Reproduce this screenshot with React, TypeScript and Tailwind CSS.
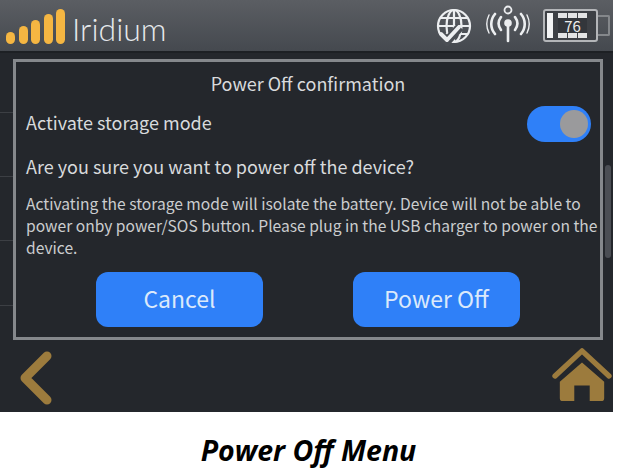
const SIGNAL_BARS = ['h-[12px]', 'h-[18px]', 'h-[24px]', 'h-[30px]', 'h-[35px]'];

function GlobeCheck() {
  return (
    <svg width="38" height="38" viewBox="0 0 38 38" fill="none" stroke="#eceef0" strokeWidth="2.2" className="mt-[2px]">
      <circle cx="19" cy="18" r="16" />
      <ellipse cx="19" cy="18" rx="7.5" ry="16" />
      <path d="M19 2v32M3 18h32M5.5 10h27M5.5 26h27" />
      <path d="M5 26l7 7 13-14" stroke="#4a4e54" strokeWidth="9" />
      <path d="M6 26l6 6 12-13" stroke="#eceef0" strokeWidth="4" strokeLinecap="round" strokeLinejoin="round" />
    </svg>
  );
}

function Antenna() {
  return (
    <svg width="44" height="38" viewBox="0 0 44 38" fill="none" stroke="#eceef0" strokeLinecap="round" className="mb-[4px]">
      <circle cx="22" cy="5" r="3.5" strokeWidth="1.8" />
      <circle cx="22" cy="18" r="3.8" fill="#eceef0" stroke="none" />
      <path d="M22 18v18" strokeWidth="2.6" />
      <path d="M15 12c-3 4-3 9 0 13M29 12c3 4 3 9 0 13" strokeWidth="2.6" />
      <path d="M9 9c-5 6-5 14 0 20M35 9c5 6 5 14 0 20" strokeWidth="2.6" />
      <path d="M3 10c-3 6-3 12 0 18M41 10c3 6 3 12 0 18" strokeWidth="1.4" />
    </svg>
  );
}

function Battery() {
  return (
    <div className="flex items-center">
      <div className="relative flex h-[33px] w-[55px] items-center rounded-[3px] border-2 border-[#b4b6b9] bg-[#3d4045] px-[2px] py-[2px]">
        <div className="h-full w-[6px] bg-[#f2f3f4]" />
        <div className="ml-[5px] h-full w-[9px] bg-[#e2e3e4]" />
        <div className="ml-[1px] h-full w-[9px] bg-[#e2e3e4]" />
        <div className="ml-[1px] h-full w-[9px] bg-[#e2e3e4]" />
        <span className="absolute left-[13px] top-[7px] flex h-[15px] w-[29px] items-center justify-center bg-[#33363b] text-[15px] leading-none text-[#eceded]">
          76
        </span>
      </div>
      <div className="h-[21px] w-[12px] rounded-r-[2px] border-2 border-l-0 border-[#84878b]" />
    </div>
  );
}

function BackIcon() {
  return (
    <svg width="36" height="56" viewBox="0 0 36 56" fill="none" className="mt-[3px]">
      <path d="M28 6L6 28l22 22" stroke="#9c7b3d" strokeWidth="9" strokeLinecap="round" strokeLinejoin="round" />
    </svg>
  );
}

function HomeIcon() {
  return (
    <svg width="60" height="54" viewBox="0 0 62 56" fill="none" className="mb-[3px]">
      <path d="M3 29L31 3l28 26" stroke="#9c7b3d" strokeWidth="5.5" strokeLinecap="round" strokeLinejoin="round" />
      <path d="M31 15L8 35v17a3 3 0 003 3h12V39h16v16h12a3 3 0 003-3V35z" fill="#9c7b3d" />
    </svg>
  );
}

export default function App() {
  return (
    <div
      className="flex h-[475px] w-[617px] flex-col overflow-hidden bg-white"
      style={{ fontFamily: '"Noto Sans CJK SC", "Noto Sans", sans-serif' }}
    >
      <div className="flex h-[412px] w-[613px] flex-col bg-[#24272c]">
        {/* Status bar */}
        <header className="flex h-[53px] shrink-0 items-center border-b-[2px] border-[#1d2024] bg-gradient-to-b from-[#5b5e63] to-[#45494f] pl-[6px]">
          <div className="mt-[2px] flex items-end gap-[3.5px]">
            {SIGNAL_BARS.map((h, i) => (
              <div key={i} className={`w-[9px] rounded-full bg-[#f5b642] ${h}`} />
            ))}
          </div>
          <span
            className="ml-[7px] mt-[6px] text-[32px] font-light leading-none text-[#e6e9ec]"
            style={{ fontFamily: 'Lato, sans-serif' }}
          >
            Iridium
          </span>
          <div className="ml-auto flex items-center gap-[13px] pr-[3px]">
            <GlobeCheck />
            <Antenna />
            <Battery />
          </div>
        </header>

        <div className="relative flex flex-1 flex-col">
          {/* list rows behind the dialog */}
          <div className="absolute left-0 top-[59px] h-px w-[13px] bg-[#3c3f44]" />
          <div className="absolute left-0 top-[123px] h-px w-[13px] bg-[#3c3f44]" />
          <div className="absolute left-0 top-[187px] h-px w-[13px] bg-[#3c3f44]" />
          <div className="absolute left-0 top-[252px] h-px w-[13px] bg-[#3c3f44]" />
          <div className="absolute left-[605px] top-[112px] h-[93px] w-[6px] rounded-full bg-[#4b4e54]" />

          {/* Dialog */}
          <main className="flex flex-1 flex-col pl-[13px] pt-[6px]">
            <section className="flex h-[281px] w-[590px] flex-col border-[3px] border-[#85888c] bg-[#24272c] px-[10px] text-[#d8dadc]">
              <h2 className="mt-[9px] text-center text-[18px] leading-[24px]">Power Off confirmation</h2>
              <div className="mt-[11px] flex h-[36px] items-center justify-between">
                <span className="mb-[4px] text-[18px] leading-[24px]">Activate storage mode</span>
                <div className="-mr-px flex h-[36px] w-[64px] items-center justify-end rounded-full bg-[#2f80f8] pr-[3px]">
                  <div className="h-[28px] w-[28px] rounded-full bg-[#9a9a9c]" />
                </div>
              </div>
              <p className="mt-[12px] text-[18px] leading-[24px]">Are you sure you want to power off the device?</p>
              <p className="mt-[14px] w-[576px] text-[15.6px] leading-[22px] text-[#cbcdcf]">
                Activating the storage mode will isolate the battery. Device will not be able to power onby power/SOS
                button. Please plug in the USB charger to power on the device.
              </p>
              <div className="mt-[14px] flex gap-[90px] pl-[70px]">
                <button className="h-[55px] w-[167px] rounded-[12px] bg-[#2f80f8] pb-[2px] text-[23px] text-[#dbe9fb]">Cancel</button>
                <button className="h-[55px] w-[167px] rounded-[12px] bg-[#2f80f8] pb-[2px] text-[23px] text-[#dbe9fb]">Power Off</button>
              </div>
            </section>
            <footer className="flex flex-1 items-center justify-between pl-[6px] pr-[1px]">
              <BackIcon />
              <HomeIcon />
            </footer>
          </main>
        </div>
      </div>
      <p
        className="mt-[21px] text-center text-[28.5px] font-bold italic leading-[34px] text-black"
        style={{ fontFamily: '"Open Sans", sans-serif' }}
      >
        Power Off Menu
      </p>
    </div>
  );
}
